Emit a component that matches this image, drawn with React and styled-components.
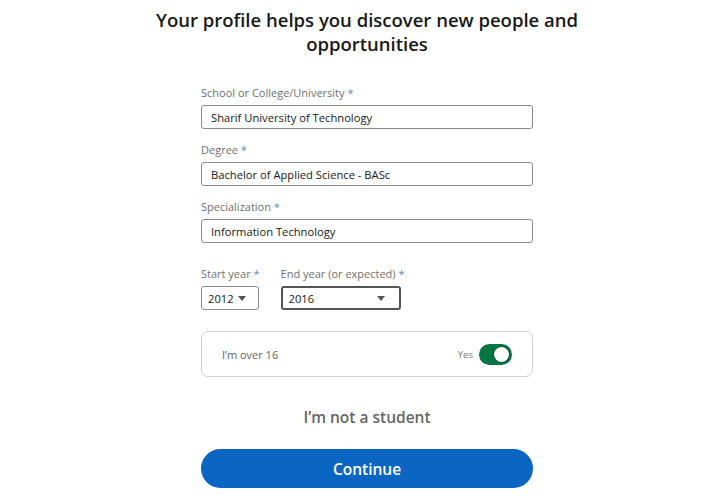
import React, { useState } from "react";
import styled, { createGlobalStyle } from "styled-components";

const GlobalStyle = createGlobalStyle`
  html, body {
    margin: 0;
    padding: 0;
    background: #ffffff;
    font-family: "Open Sans", "Noto Sans", sans-serif;
    color: #191919;
  }
`

const Page = styled.div`
  width: 720px;
  height: 502px;
  box-sizing: border-box;
  padding-left: 14px;
  display: flex;
  flex-direction: column;
  align-items: center;
  overflow: hidden;
`

const Title = styled.h1`
  margin: 8px 0 0;
  width: 440px;
  font-size: 18.5px;
  font-weight: 600;
  line-height: 24px;
  text-align: center;
  color: #191919;
`

const Form = styled.div`
  width: 332px;
  margin-top: 29px;
  display: flex;
  flex-direction: column;
`

const Field = styled.div`
  display: flex;
  flex-direction: column;
  margin-bottom: ${p => p.$gap ?? 13}px;
`

const Label = styled.label`
  font-size: 11px;
  line-height: 16px;
  color: #707070;
  margin-bottom: 4px;
  white-space: nowrap;

  span {
    color: #5b8bb8;
  }
`

const Input = styled.div`
  height: 24px;
  box-sizing: border-box;
  border: 1px solid #8c8c8c;
  border-radius: 3px;
  padding: 0 9px;
  display: flex;
  align-items: center;
  font-size: 11.2px;
  color: #191919;
`

const YearRow = styled.div`
  display: flex;
  gap: 21px;
  margin-bottom: 21px;
`

const Select = styled.div`
  width: ${p => p.$width}px;
  height: 24px;
  box-sizing: border-box;
  border: ${p => (p.$focused ? "2px solid #555555" : "1px solid #8c8c8c")};
  border-radius: 3px;
  padding: 0 ${p => (p.$focused ? 14 : 12)}px 0 6px;
  display: flex;
  align-items: center;
  justify-content: space-between;
  font-size: 11.2px;
  color: #191919;
`

const Caret = styled.span`
  width: 0;
  height: 0;
  border-left: 4.5px solid transparent;
  border-right: 4.5px solid transparent;
  border-top: 5px solid #555555;
`

const Card = styled.div`
  height: 46px;
  box-sizing: border-box;
  border: 1px solid #d0d0d0;
  border-radius: 7px;
  display: flex;
  align-items: center;
  justify-content: space-between;
  padding: 0 20px;
  font-size: 11px;
  color: #666666;
`

const ToggleWrap = styled.div`
  display: flex;
  align-items: center;
  gap: 6px;
  font-size: 9.5px;
  color: #777777;
`

const Toggle = styled.button`
  width: 33px;
  height: 21px;
  border: none;
  border-radius: 11px;
  background: #057642;
  padding: 0;
  position: relative;
  cursor: pointer;

  &::after {
    content: "";
    position: absolute;
    top: 3px;
    left: ${p => (p.$on ? 15 : 3)}px;
    width: 15px;
    height: 15px;
    border-radius: 50%;
    background: #ffffff;
    box-shadow: 0 0 0 1px #045c34;
  }
`

const Secondary = styled.div`
  margin-top: 29px;
  line-height: 22px;
  text-align: center;
  font-size: 15.5px;
  font-weight: 600;
  color: #666666;
`

const Continue = styled.button`
  margin-top: 21px;
  height: 39px;
  border: none;
  border-radius: 20px;
  background: #0a66c2;
  color: #ffffff;
  font-family: inherit;
  font-size: 15.5px;
  font-weight: 600;
  cursor: pointer;
`

const App = () => {
  const [over16, setOver16] = useState(true)

  return (
    <Page>
      <GlobalStyle />
      <Title>Your profile helps you discover new people and opportunities</Title>
      <Form>
        <Field>
          <Label>School or College/University <span>*</span></Label>
          <Input>Sharif University of Technology</Input>
        </Field>
        <Field>
          <Label>Degree <span>*</span></Label>
          <Input>Bachelor of Applied Science - BASc</Input>
        </Field>
        <Field $gap={23}>
          <Label>Specialization <span>*</span></Label>
          <Input>Information Technology</Input>
        </Field>
        <YearRow>
          <Field $gap={0}>
            <Label>Start year <span>*</span></Label>
            <Select $width={58}>2012<Caret /></Select>
          </Field>
          <Field $gap={0}>
            <Label>End year (or expected) <span>*</span></Label>
            <Select $width={120} $focused>2016<Caret /></Select>
          </Field>
        </YearRow>
        <Card>
          I’m over 16
          <ToggleWrap>
            Yes
            <Toggle $on={over16} onClick={() => setOver16(!over16)} />
          </ToggleWrap>
        </Card>
        <Secondary>I’m not a student</Secondary>
        <Continue>Continue</Continue>
      </Form>
    </Page>
  )
}

export default App
